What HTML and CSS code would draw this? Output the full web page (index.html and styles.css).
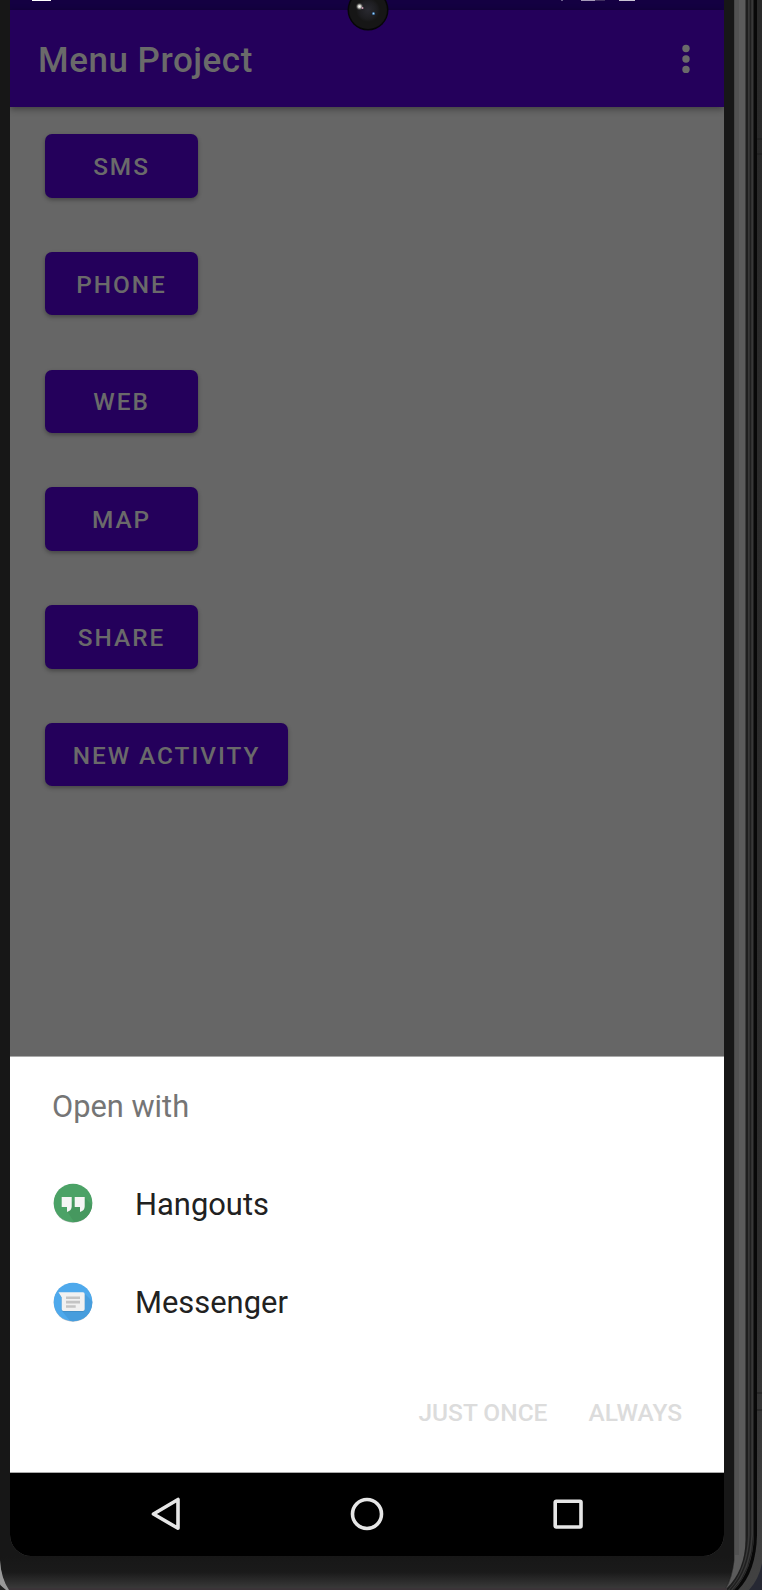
FILE: index.html
```
<!DOCTYPE html>
<html lang="en">
<head>
<meta charset="utf-8">
<title>Menu Project</title>
<link rel="stylesheet" href="styles.css">
</head>
<body>
<div class="device">
  <svg class="frame" width="762" height="1590" viewBox="0 0 762 1590" fill="none" aria-hidden="true">
    <defs>
      <linearGradient id="bezel" x1="0" y1="0" x2="0" y2="1"><stop offset="0" stop-color="#171717"/><stop offset=".5" stop-color="#1a1a1a"/><stop offset="1" stop-color="#3a3a3a"/></linearGradient>
      <linearGradient id="edge" x1="0" y1="0" x2="0" y2="1"><stop offset="0" stop-color="#292929"/><stop offset=".8" stop-color="#2c2c2c"/><stop offset="1" stop-color="#424242"/></linearGradient>
    </defs>
    <rect width="762" height="1590" fill="#262833"/>
    <path d="M0 0H762V1563Q759 1579 749 1590H0Z" fill="url(#edge)"/>
    <path d="M0 0H757V1535Q756 1572 738 1590H0Z" fill="#080808"/>
    <path d="M0 0H754V1535Q753 1570 734 1590H0Z" fill="#383838"/>
    <path d="M750.500 0V1535Q749 1570 730 1590" stroke="#1f1f1f" stroke-width="1.500"/>
    <path d="M753.500 0V1535Q752 1571 733 1590" stroke="#202020" stroke-width="1"/>
    <path d="M0 0H748V1535Q747 1570 728 1590H0Z" fill="#1e1e1e"/>
    <path d="M0 0H745.500V1540Q745 1571 726 1589H0Z" fill="#5b5b5b"/>
    <path d="M737 0V1555" stroke="#525252" stroke-width="4"/>
    <path d="M0 0H734.500V1560Q733 1577 726 1589H8Q1 1578 0 1560Z" fill="#343434"/>
    <path d="M0 0H734V1560Q732 1577 725 1588H8Q1 1578 0 1560Z" fill="#171717"/>
    <path d="M0 1556H734Q732 1577 725 1588.500H8Q1 1578 0 1560Z" fill="url(#bezel)"/>
    <path d="M8 1589H727" stroke="#3b3438" stroke-width="2"/>
    <path d="M0 1560Q1 1578 9 1590H5Q1 1586 0 1584Z" fill="#999"/>
    <path d="M0 1585L6 1590H0Z" fill="#222"/>
    <path d="M757 139H762M757 154H762M757 1393H762M757 1410H762" stroke="#1c1c1c"/>
  </svg>
  <main class="screen">
    <div class="status">
      <i class="bit bit-sim"></i><i class="bit bit-wifi"></i><i class="bit bit-signal"></i><i class="bit bit-battery"></i>
    </div>
    <header class="toolbar">
      <h1 class="title">Menu Project</h1>
      <svg class="more" width="8" height="30" viewBox="0 0 8 30" fill="#6a6a6a"><circle cx="4" cy="4.500" r="3.700"/><circle cx="4" cy="15" r="3.700"/><circle cx="4" cy="25.400" r="3.700"/></svg>
    </header>
    <section class="content">
      <button class="btn">SMS</button>
      <button class="btn">PHONE</button>
      <button class="btn">WEB</button>
      <button class="btn">MAP</button>
      <button class="btn">SHARE</button>
      <button class="btn btn-wide">NEW ACTIVITY</button>
    </section>
    <section class="sheet">
      <h2 class="sheet-title">Open with</h2>
      <div class="app">
        <svg width="40" height="40" viewBox="0 0 40 40">
          <defs><clipPath id="disc"><circle cx="20" cy="20" r="19.300"/></clipPath></defs>
          <circle cx="20" cy="20.500" r="19.300" fill="#b5beb8"/><circle cx="20" cy="20" r="19.300" fill="#4ba266"/>
          <path clip-path="url(#disc)" d="M31 14L45 28V45H25L14 28L20 18Z" fill="#46985f"/>
          <path d="M8.700 14h10v9.500q0 4-4.700 5.500v-5H8.700zM21.700 14h10v9.500q0 4-4.700 5.500v-5h-5.300z" fill="#f5f5f5"/>
        </svg>
        <span>Hangouts</span>
      </div>
      <div class="app">
        <svg width="40" height="40" viewBox="0 0 40 40">
          <circle cx="20" cy="20.500" r="19.300" fill="#b6bdc3"/><circle cx="20" cy="20" r="19.300" fill="#4ea9ec"/>
          <path clip-path="url(#disc)" d="M31 11L45 25V45H22L9 29L25 20Z" fill="#479ddd"/>
          <path d="M6 11h24q1.700 0 1.700 1.700v15q0 1.700-1.700 1.700H10.400q-1.700 0-1.700-1.700V16z" fill="#3b82b5"/>
          <path d="M5.500 10.300H30q1.700 0 1.700 1.700v15.300q0 1.700-1.700 1.700H10.400q-1.700 0-1.700-1.700V15.500z" fill="#f1f1f1"/>
          <path d="M13 15.800h14M13 20.100h14M13 24.500h9.700" stroke="#c4c4c4" stroke-width="2.600"/>
        </svg>
        <span>Messenger</span>
      </div>
      <div class="actions"><span>JUST ONCE</span><span>ALWAYS</span></div>
    </section>
    <nav class="nav">
      <svg width="34" height="34" viewBox="0 0 34 34"><path d="M29 2.500V31.300L4.500 17Z"/></svg>
      <svg width="34" height="34" viewBox="0 0 34 34"><circle cx="17" cy="17" r="14.500"/></svg>
      <svg width="34" height="34" viewBox="0 0 34 34"><rect x="4.200" y="4.200" width="25.800" height="25.800" rx="1"/></svg>
    </nav>
  </main>
  <svg class="camera" width="42" height="42" viewBox="0 0 42 42">
    <defs><radialGradient id="lens"><stop offset="0" stop-color="#292930"/><stop offset=".75" stop-color="#1d1d20"/><stop offset="1" stop-color="#161616"/></radialGradient>
    <radialGradient id="glint"><stop offset="0" stop-color="#fff"/><stop offset=".4" stop-color="#c4c4bd"/><stop offset="1" stop-color="#333" stop-opacity="0"/></radialGradient></defs>
    <circle cx="21" cy="21" r="20.500" fill="#060608"/><circle cx="21" cy="21" r="19" fill="#161616"/><circle cx="21" cy="21" r="12" fill="url(#lens)"/>
    <circle cx="12.500" cy="17.500" r="4" fill="url(#glint)"/><circle cx="15.500" cy="19" r="1" fill="#c998b0"/><circle cx="26.500" cy="24.500" r="1.500" fill="#3f78ad"/><circle cx="26.500" cy="24.500" r=".7" fill="#a9d5f5"/>
  </svg>
</div>
</body>
</html>
```

FILE: styles.css
```
* { box-sizing: border-box; }
body { margin: 0; font-family: Roboto, "Liberation Sans", sans-serif; background: #171717; }
h1, h2 { margin: 0; }
.device { position: relative; width: 762px; height: 1590px; overflow: hidden; padding-left: 10px; }
.frame { position: absolute; left: 0; top: 0; }
.screen { position: relative; width: 714px; height: 1556px; display: flex; flex-direction: column; overflow: hidden; border-radius: 0 0 21px 21px; background: #666; }
.status { display: flex; flex: none; height: 9.5px; background: #140042; }
.bit { height: 1px; }
.bit-sim { width: 19px; margin-left: 22px; background: #fff; }
.bit-wifi { width: 2px; margin-left: 510px; background: #6b5f8c; }
.bit-signal { width: 24px; margin-left: 18px; background: linear-gradient(90deg, #a59bb8 60%, #403060 60%); }
.bit-battery { width: 16px; margin-left: 14px; background: #c9c5d4; }
.toolbar { display: flex; flex: none; align-items: center; justify-content: space-between; height: 97.5px; padding: 0 34px 0 28px; background: #24005b; box-shadow: 0 2px 7px rgba(0, 0, 0, .4); }
.title { color: #6a6a6a; font-size: 35px; font-weight: 500; line-height: 42px; padding-top: 5px; letter-spacing: .52px; }
.content { display: flex; flex: none; flex-direction: column; align-items: flex-start; gap: 54.3px; height: 949px; padding: 27px 35px 0; }
.btn { flex: none; width: 153px; height: 63.5px; padding: 2px 0 0; border: 0; border-radius: 7px; background: #24005b; color: #6a6a6a; font: 500 24.4px/28px Roboto, sans-serif; letter-spacing: 1.95px; white-space: nowrap; box-shadow: 0 2px 4px rgba(0, 0, 0, .32); }
.btn-wide { width: 243px; }
.more { margin-top: 1px; }
.sheet { flex: none; height: 417.3px; padding: 32px 42px 0 42px; background: #fff; border-top: 1px solid #aaa; border-bottom: 1px solid #aaa; }
.sheet-title { color: #757575; font-size: 30.8px; font-weight: 400; line-height: 36px; margin-bottom: 29px; }
.app { display: flex; align-items: center; height: 98.6px; gap: 42.5px; padding-left: .5px; color: #212121; font-size: 30.9px; line-height: 36px; }
.app span { padding-top: 3px; }
.actions { display: flex; justify-content: flex-end; gap: 41px; padding-top: 47px; color: #dcdcdc; font-size: 24.5px; font-weight: 500; line-height: 30px; }
.nav { display: flex; flex: 1; align-items: flex-start; justify-content: center; gap: 167px; padding-top: 24px; background: #000; }
.nav svg { fill: none; stroke: #e6e6e6; stroke-width: 3.6; stroke-linejoin: round; }
.camera { position: absolute; left: 347px; top: -11px; }
```
